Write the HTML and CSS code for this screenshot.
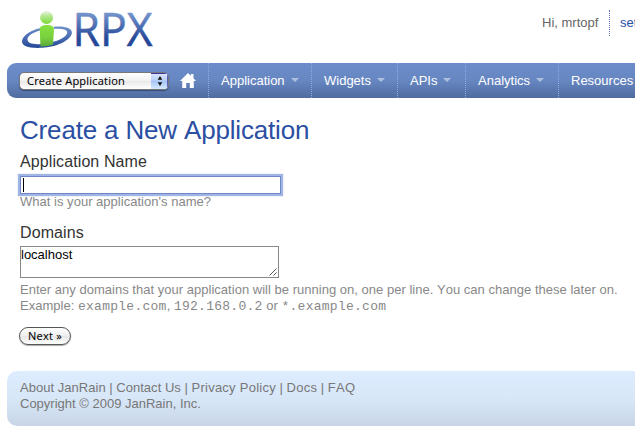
FILE: index.html
```
<!DOCTYPE html>
<html lang="en">
<head>
<meta charset="utf-8">
<title>RPX - Create a New Application</title>
<link rel="stylesheet" href="styles.css">
</head>
<body>
<header class="header">
  <svg class="logo" width="136" height="50" viewBox="0 0 136 50" role="img" aria-label="RPX">
    <defs>
      <linearGradient id="blue" x1="0" y1="0" x2="0" y2="1"><stop offset="0" stop-color="#6f91ca"/><stop offset="1" stop-color="#254898"/></linearGradient>
      <linearGradient id="word" gradientUnits="userSpaceOnUse" x1="0" y1="3" x2="0" y2="37"><stop offset="0" stop-color="#7595cc"/><stop offset=".75" stop-color="#254898"/></linearGradient>
      <linearGradient id="head" x1="0" y1="0" x2="0" y2="1"><stop offset="0" stop-color="#eef3e9"/><stop offset=".35" stop-color="#b9e897"/><stop offset="1" stop-color="#7bd934"/></linearGradient>
      <linearGradient id="body" x1="0" y1="0" x2="0" y2="1"><stop offset="0" stop-color="#86e340"/><stop offset=".6" stop-color="#78cf3c"/><stop offset="1" stop-color="#5aa63c"/></linearGradient>
    </defs>
    <path fill="url(#blue)" fill-rule="evenodd" d="M34 16.700C45 15.800 53 18.500 51.800 23.500C50 31 36 37 22 37.800C9 38.500 0 36 2.300 29.800C4.300 24.500 11 20 21 18V20.200C13 22.200 8 25.500 7.500 28.800C7 34 15 35 24 33.700C36 32.200 45.500 28 47 23.500C48.500 19.500 43 18.500 34 18.700Z"/>
    <path fill="url(#body)" d="M19.700 19C19.700 16.200 23 15 27 15S34 16.200 34 19L33 34.500Q27 37 20.500 36.500Z"/>
    <circle cx="26.600" cy="7.500" r="6.500" fill="url(#head)"/>
    <text class="wordmark" x="52.500" y="36" textLength="80" lengthAdjust="spacingAndGlyphs">RPX</text>
  </svg>
  <div class="account"><span class="greeting">Hi, mrtopf</span><a class="settings">settings</a></div>
</header>
<nav class="nav">
  <div class="picker"><span class="picker-label">Create Application</span><span class="picker-arrows"><svg width="6" height="10" viewBox="0 0 6 10"><path d="M3 0 5.300 3.700H.7ZM3 10 .7 6.300H5.300Z" fill="#111"/></svg></span></div>
  <a class="home"><svg width="16" height="15" viewBox="0 0 16 15"><path fill="#fff" d="M8 0 11 2.800V1H13.500V5.200L16 8H13.800V15H9.800V10H6.200V15H2.200V8H0Z"/></svg></a>
  <a class="item application">Application<i class="caret"></i></a>
  <a class="item widgets">Widgets<i class="caret"></i></a>
  <a class="item apis">APIs<i class="caret"></i></a>
  <a class="item analytics">Analytics<i class="caret"></i></a>
  <a class="item resources">Resources<i class="caret"></i></a>
</nav>
<main class="content">
  <h1>Create a New Application</h1>
  <label class="label">Application Name</label>
  <div class="name-input"><span class="cursor"></span></div>
  <p class="hint">What is your application's name?</p>
  <label class="label domains-label">Domains</label>
  <div class="domains"><span>localhost</span><svg class="grip" width="8" height="8" viewBox="0 0 8 8"><path d="M.5 7.500 7.500.5M4.500 7.500 7.500 4.500" stroke="#555"/></svg></div>
  <p class="hint domains-hint">Enter any domains that your application will be running on, one per line. You can change these later on.<br>Example: <code>example.com</code>, <code>192.168.0.2</code> or <code>*.example.com</code></p>
  <button class="next">Next »</button>
</main>
<footer class="footer">
  <div><a>About JanRain</a> | <a>Contact Us</a> | <a class="wide">Privacy Policy</a> | <a class="wide">Docs</a> | <a class="wide">FAQ</a></div>
  <div>Copyright © 2009 JanRain, Inc.</div>
</footer>
</body>
</html>
```
FILE: styles.css
```
* { box-sizing: border-box; }
body {
  margin: 0;
  height: 436px;
  overflow: hidden;
  background: #fff;
  color: #777;
  font: 13px/16px "Liberation Sans", Arial, sans-serif;
  font-kerning: none;
}
.header {
  display: flex;
  justify-content: space-between;
  height: 63px;
  padding: 10px 0 0 20px;
}
.logo { display: block; overflow: visible; }
.wordmark {
  fill: url(#word);
  stroke: url(#word);
  stroke-width: .5px;
  font-family: "Open Sans", "Noto Sans", sans-serif;
  font-size: 45px;
}
.account {
  display: flex;
  width: 93px;
  height: 26px;
  line-height: 26px;
  white-space: nowrap;
  color: #666;
}
.greeting { flex: 0 0 67px; }
.settings {
  padding-left: 10px;
  border-left: 1px dotted #5c7cc4;
  color: #2b50a8;
}
.nav {
  display: flex;
  height: 35px;
  margin-left: 7px;
  border-radius: 9px 0 0 9px;
  background: linear-gradient(#6b8cca, #6787c2 50%, #506c9f);
  overflow: hidden;
}
.picker {
  display: flex;
  flex: 0 0 150px;
  height: 18px;
  margin: 9px 0 0 12px;
  border: 1px solid #777;
  border-radius: 5px;
  background: linear-gradient(#fff, #f1f1f1 50%, #e8e8e8 50%, #fff);
  box-shadow: 0 1px 1px #344b77;
  overflow: hidden;
  color: #000;
  font: 11px/16px "Open Sans", "Noto Sans", sans-serif;
}
.picker-label { flex: 1; padding-left: 7px; letter-spacing: .22px; -webkit-text-stroke: .1px #000; }
.picker-arrows {
  display: flex;
  align-items: center;
  justify-content: center;
  width: 17px;
  box-shadow: inset 0 1px #4038a0, inset -1px 0 #5c5cc0;
  background: linear-gradient(#dce6fc, #bcd1f8 45%, #a5c3f5 50%, #d4eaff);
}
.home { flex: 0 0 39px; padding: 10px 0 0 11px; }
.home svg { display: block; }
.item {
  flex: none;
  padding-left: 12px;
  border-left: 1px dotted #92abdc;
  color: #fff;
  line-height: 35px;
  white-space: nowrap;
}
.application { width: 103px; }
.widgets { width: 86px; }
.apis { width: 68px; }
.analytics { width: 93px; }
.caret {
  display: inline-block;
  margin-left: 6px;
  border: 4px solid transparent;
  border-top-color: #aebfdf;
  border-bottom: 0;
  vertical-align: 3px;
}
.content { height: 273px; padding: 17px 0 0 20px; }
h1 {
  margin: 0;
  color: #2b4fa2;
  font-size: 26px;
  font-weight: normal;
  letter-spacing: -.17px;
  line-height: 30px;
}
.label {
  display: block;
  margin-top: 8px;
  color: #333;
  font-size: 16px;
  letter-spacing: .1px;
  line-height: 18px;
}
.name-input {
  width: 261px;
  height: 18px;
  margin-top: 5px;
  padding: 1px 2px;
  border: 1px solid #7087c2;
  background: #fff;
  box-shadow: 0 0 1px 2px #a0b4e6;
}
.cursor { display: block; width: 1px; height: 14px; background: #000; }
.hint { margin: 0; color: #888; letter-spacing: .02px; white-space: nowrap; }
.domains-label { margin-top: 14px; }
.domains {
  display: flex;
  justify-content: space-between;
  width: 259px;
  height: 32px;
  margin-top: 4px;
  border: 1px solid #888;
  color: #000;
}
.grip { align-self: flex-end; margin: 0 1px 1px; }
.domains-hint { margin-top: 4px; }
code { font: 13px/15px "Liberation Mono", monospace; letter-spacing: .26px; }
.next {
  display: block;
  width: 52px;
  height: 18px;
  margin: 13px 0 0 -1px;
  padding: 0;
  border: 1px solid #555;
  border-radius: 9px;
  background: linear-gradient(#fff, #eee 50%, #e5e5e5 50%, #fff);
  box-shadow: 0 1px 1px #aaa;
  color: #000;
  font: 11px/14px "Open Sans", "Noto Sans", sans-serif;
  letter-spacing: .3px;
  -webkit-text-stroke: .1px #000;
}
.footer {
  height: 55px;
  margin-left: 7px;
  padding: 9px 0 0 13px;
  border-radius: 10px 0 0 10px;
  background: linear-gradient(#ddecfe, #d8e7f8 50%, #c7d5e6);
}
.footer a { letter-spacing: .03px; }
.footer .wide { letter-spacing: .25px; }
```
